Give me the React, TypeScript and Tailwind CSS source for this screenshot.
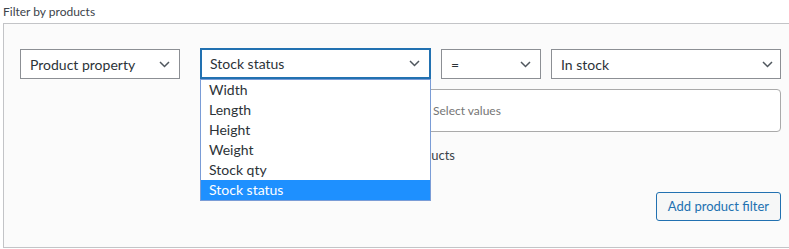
import React from "react";

const Chevron: React.FC = () => (
  <svg width="11" height="7" viewBox="0 0 11 7" fill="none" className="shrink-0">
    <polyline points="1,1 5.5,5.5 10,1" stroke="#50575e" strokeWidth="1.5" />
  </svg>
);

const SelectBox: React.FC<{ label: string; className: string }> = ({ label, className }) => (
  <div className={`flex items-center justify-between bg-white text-[14px] text-[#2c3338] ${className}`}>
    <span>{label}</span>
    <Chevron />
  </div>
);

const App: React.FC = () => {
  const options = ["Width", "Length", "Height", "Weight", "Stock qty", "Stock status"];

  return (
    <div className="w-[789px] h-[249px] overflow-hidden bg-white font-['Lato',sans-serif]">
      <div className="pl-[3px] pt-[3px] text-[12px] leading-[17px] text-[#3c434a]">Filter by products</div>

      <div className="relative mt-[3px] ml-[3px] w-[820px] h-[225px] border border-[#c3c4c7] bg-[#fbfbfb] pl-4 pt-[25px]">
        <div className="w-[761px]">
          {/* condition row */}
          <div className="flex items-start h-[30px]">
            <SelectBox label="Product property" className="w-[160px] h-[30px] border border-[#8c8f94] pl-[9px] pr-[9px]" />
            <SelectBox label="Stock status" className="ml-[20px] -mt-px w-[231px] h-[31px] border-2 border-[#2271b1] pl-[8px] pr-[9px]" />
            <SelectBox label="=" className="ml-[10px] w-[100px] h-[30px] border border-[#8c8f94] pl-[9px] pr-[9px]" />
            <SelectBox label="In stock" className="ml-[10px] w-[230px] h-[30px] border border-[#8c8f94] pl-[9px] pr-[7px]" />
          </div>

          <div className="mt-[10px] ml-[404px] w-[357px] h-[43px] flex items-center border border-[#aaa] rounded-[4px] bg-white pl-[8px] text-[12px] text-[#757575]">
            Select values
          </div>

          <div className="mt-[15px] w-[435px] flex justify-end items-center gap-[6px] text-[13px] leading-[17px] text-[#3c434a]">
            <span className="w-[14px] h-[14px] border border-[#8c8f94] rounded-[3px] bg-white" />
            <span>Exclude products</span>
          </div>

          <div className="mt-[28px] flex justify-end">
            <button className="h-[29px] px-[11px] border border-[#2271b1] rounded-[3px] bg-[#f6f7f7] text-[13px] text-[#2271b1]">
              Add product filter
            </button>
          </div>
        </div>

        {/* open native list of the second select */}
        <div className="absolute left-[196px] top-[55px] w-[231px] border border-[#7a9cd6] bg-white">
          {options.map((opt, i) => (
            <div
              key={opt}
              className={`h-[20px] pl-[8px] text-[14px] leading-[20px] ${
                i === options.length - 1 ? "bg-[#1e90ff] text-white" : "text-[#2c3338]"
              }`}
            >
              {opt}
            </div>
          ))}
        </div>
      </div>
    </div>
  );
};

export default App;
